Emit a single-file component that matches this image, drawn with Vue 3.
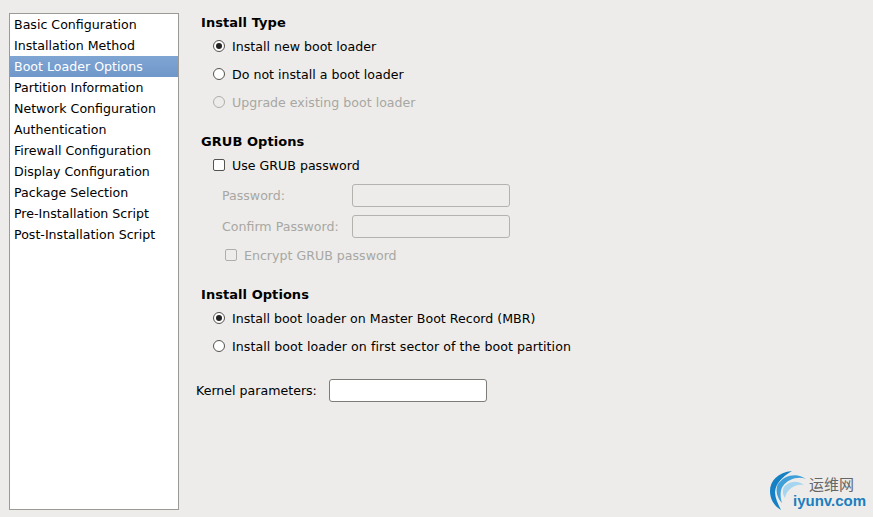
<template>
  <div class="page">
    <ul class="steps">
      <li v-for="(step, index) in steps" :key="index" :class="{ selected: index === 2 }">{{ step }}</li>
    </ul>

    <div class="content">
      <h3 class="heading">Install Type</h3>
      <div class="row option"><span class="radio on"></span>Install new boot loader</div>
      <div class="row option"><span class="radio"></span>Do not install a boot loader</div>
      <div class="row option disabled"><span class="radio"></span>Upgrade existing boot loader</div>

      <h3 class="heading grub">GRUB Options</h3>
      <div class="row check-row"><span class="check"></span>Use GRUB password</div>
      <div class="field disabled first">
        <label>Password:</label>
        <span class="input"></span>
      </div>
      <div class="field disabled">
        <label>Confirm Password:</label>
        <span class="input"></span>
      </div>
      <div class="row encrypt disabled"><span class="check"></span>Encrypt GRUB password</div>

      <h3 class="heading options">Install Options</h3>
      <div class="row option"><span class="radio on"></span>Install boot loader on Master Boot Record (MBR)</div>
      <div class="row option wide"><span class="radio"></span>Install boot loader on first sector of the boot partition</div>

      <div class="kernel">
        <label>Kernel parameters:</label>
        <span class="input white"></span>
      </div>
    </div>

    <!-- watermark -->
    <div class="logo">
      <svg width="46" height="42" viewBox="0 0 46 42">
        <path d="M22 1C8 2 0 11 0 21C0 29 4 36 11 40C8 34 5 28 5 22C6 13 12 7 22 1Z" fill="#1580c4" />
        <path d="M36 9C27 2 14 5 8 14C5 20 7 28 12 33C10 26 10 20 13 16C18 9 28 6 36 9Z" fill="#3f9fd8" />
        <path d="M34 15C26 9 18 12 14 17C12 21 13 25 15 28C16 21 24 13 34 15Z" fill="#a5d5ef" />
      </svg>
      <div class="logo-cn">运维网</div>
      <div class="logo-en">iyunv.com</div>
    </div>
  </div>
</template>

<script setup>
const steps = [
  'Basic Configuration',
  'Installation Method',
  'Boot Loader Options',
  'Partition Information',
  'Network Configuration',
  'Authentication',
  'Firewall Configuration',
  'Display Configuration',
  'Package Selection',
  'Pre-Installation Script',
  'Post-Installation Script'
];
</script>

<style>
html, body {
  margin: 0;
  background: #edecea;
}
</style>

<style scoped>
.page {
  position: relative;
  display: flex;
  width: 873px;
  height: 517px;
  overflow: hidden;
  background: #edecea;
  color: #000;
  font-family: "DejaVu Sans", sans-serif;
  font-size: 12.6px;
}

.steps {
  box-sizing: border-box;
  flex: none;
  width: 170px;
  height: 497px;
  margin: 13px 0 0 9px;
  padding: 0;
  list-style: none;
  background: #fff;
  border: 1px solid #9c9a94;
}
.steps li {
  height: 21px;
  padding-left: 4px;
  line-height: 21px;
  white-space: nowrap;
}
.steps li.selected {
  background: linear-gradient(#7fa5d3, #6f97c9);
  color: #fff;
}

.content {
  flex: none;
  padding: 14px 0 0 22px;
}

.heading {
  margin: 0 0 1px;
  height: 17px;
  line-height: 17px;
  font-size: 13px;
  font-weight: bold;
  letter-spacing: 0.05px;
}
.heading.grub { margin-top: 17px; }
.heading.options { margin-top: 21px; }

.row {
  display: flex;
  align-items: center;
  height: 28px;
  white-space: nowrap;
}
.option { padding-left: 12px; }
.option.wide { letter-spacing: 0.05px; }
.check-row {
  height: 20px;
  margin-top: 5px;
  padding-left: 12px;
}

.radio,
.check {
  box-sizing: border-box;
  display: inline-block;
  flex: none;
  width: 12px;
  height: 12px;
  margin-right: 7px;
  background: #fff;
  border: 1px solid #55534f;
}
.radio {
  position: relative;
  border-radius: 50%;
}
.radio.on::after {
  content: "";
  position: absolute;
  left: 2px;
  top: 2px;
  width: 6px;
  height: 6px;
  border-radius: 50%;
  background: #222;
}
.check {
  border-radius: 2px;
}

.disabled { color: #a8a7a3; }
.disabled .radio,
.disabled .check {
  background: #edecea;
  border-color: #b0aeaa;
}

.field {
  display: flex;
  align-items: center;
  height: 23px;
  margin-top: 8px;
  padding-left: 21px;
}
.field.first { margin-top: 9px; }
.field label {
  flex: none;
  width: 130px;
  white-space: nowrap;
}

.input {
  box-sizing: border-box;
  display: block;
  flex: none;
  width: 158px;
  height: 23px;
  border: 1px solid #b4b2ae;
  border-radius: 3px;
}
.input.white {
  background: #fff;
  border-color: #7e7c77;
}

.encrypt {
  height: 20px;
  margin-top: 7px;
  padding-left: 24px;
}

.kernel {
  display: flex;
  align-items: center;
  height: 23px;
  margin: 19px 0 0 -5px;
}
.kernel label {
  flex: none;
  width: 133px;
  white-space: nowrap;
}

.logo {
  position: absolute;
  left: 770px;
  top: 470px;
  width: 100px;
  height: 42px;
}
.logo svg {
  position: absolute;
  left: 0;
  top: 0;
}
.logo-cn {
  position: absolute;
  left: 39px;
  top: 4px;
  color: #666;
  font-family: "Noto Sans CJK SC", sans-serif;
  font-size: 15px;
  line-height: 20px;
}
.logo-en {
  position: absolute;
  left: 23px;
  top: 22px;
  color: #1c7fbe;
  font-family: "Liberation Sans", sans-serif;
  font-size: 15px;
  font-weight: bold;
  line-height: 18px;
}
</style>
